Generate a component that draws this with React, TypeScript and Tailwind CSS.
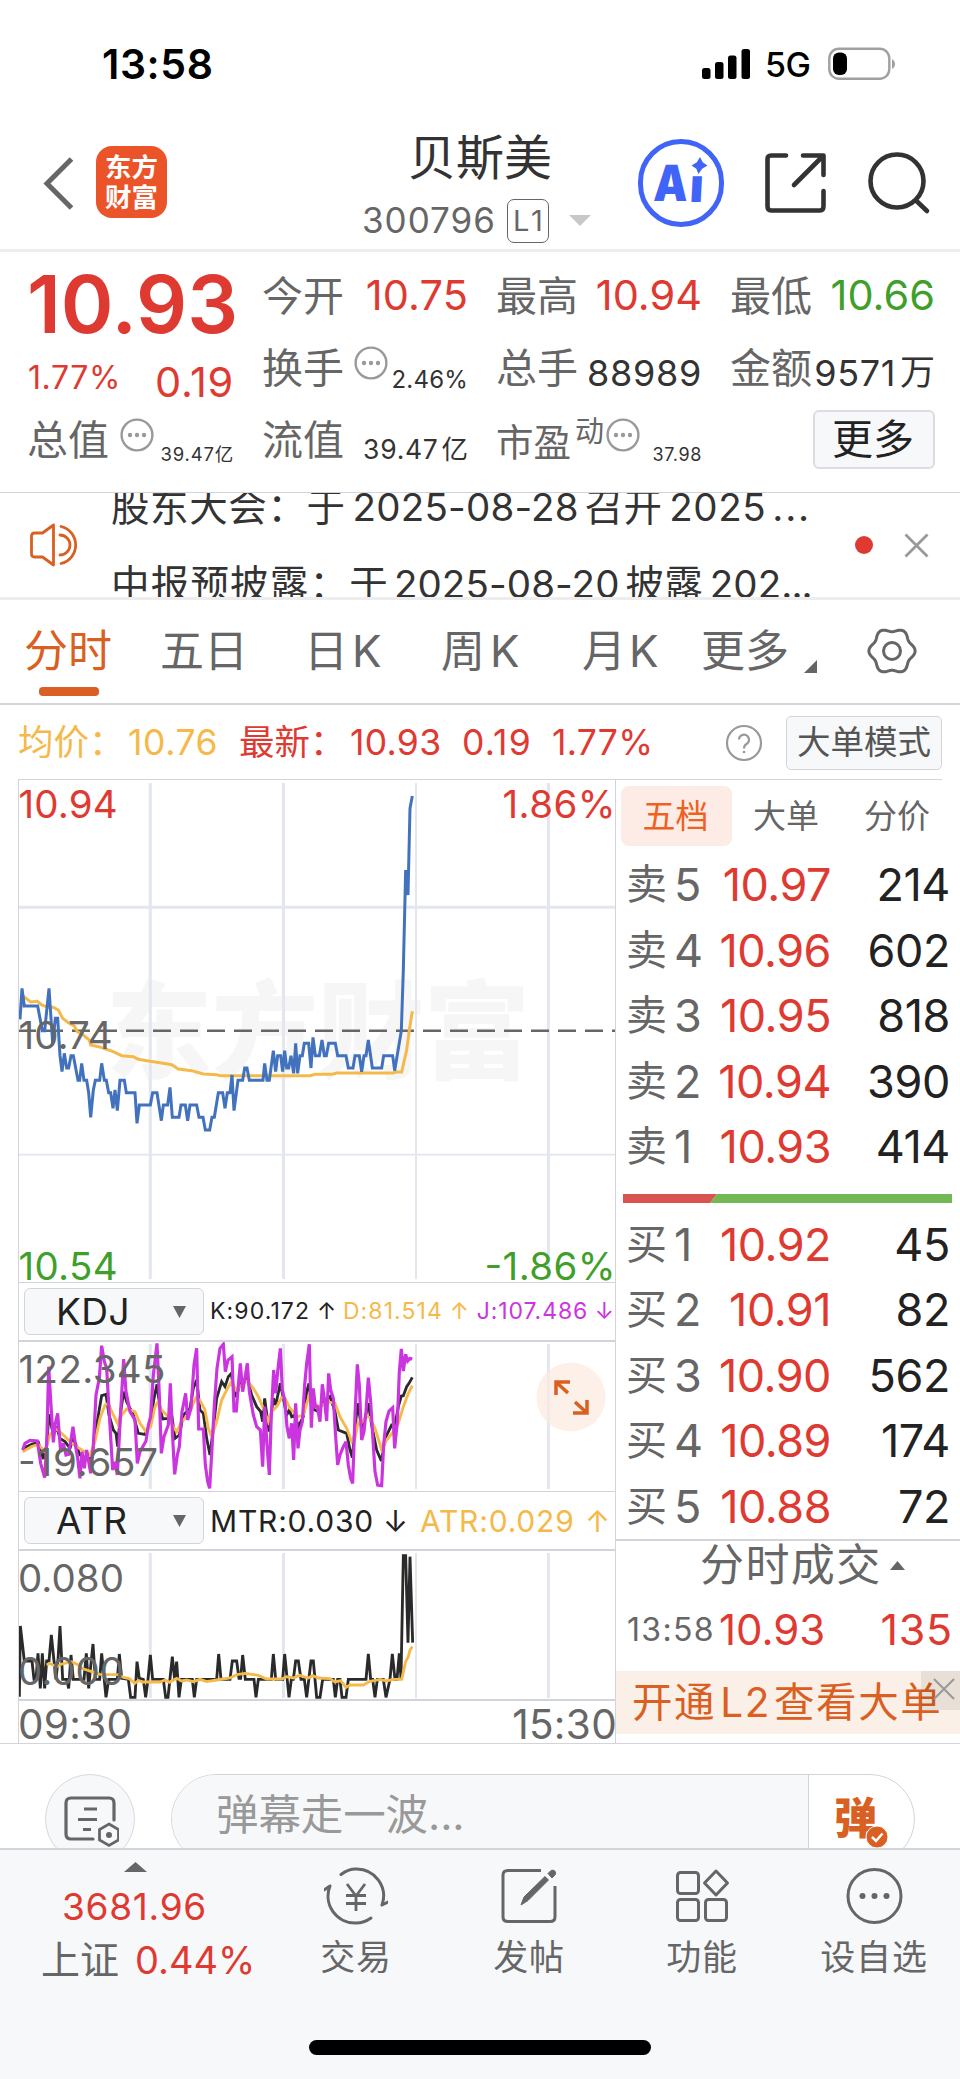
import React from "react";

const PRICE =
  "30,118 36,25 43,78 83,78 97,152 104,152 117,25 128,190 136,115 143,115 150,227 156,275 163,220 170,264 176,264 183,227 190,227 204,301 209,301 215,250 222,301 230,301 236,338 242,412 250,330 256,301 269,301 275,250 283,301 289,301 296,338 302,338 309,385 315,330 322,392 330,301 343,301 349,338 375,338 381,430 388,375 421,375 428,338 441,338 454,422 460,375 473,375 480,322 487,412 507,412 513,375 526,375 533,422 540,375 560,375 567,412 579,412 586,450 599,450 606,412 613,412 625,338 638,338 645,385 652,338 660,338 666,285 672,392 684,301 698,301 704,264 711,264 718,301 759,301 764,250 771,301 778,301 790,212 797,275 803,227 812,227 818,275 824,212 830,264 836,264 843,227 851,280 857,190 863,280 870,227 877,227 883,190 896,190 903,264 909,172 916,227 928,227 936,180 943,227 949,227 956,190 976,190 983,227 1008,227 1015,264 1029,264 1035,227 1048,227 1055,275 1062,227 1068,227 1075,180 1087,264 1115,264 1121,227 1148,227 1154,272 1174,152 1180,-30 1187,-330 1194,-255 1200,-515 1207,-552";
const AVERAGE =
  "33,85 36,56 42,50 62,66 82,64 95,75 115,82 130,82 145,90 158,115 175,128 193,138 202,155 220,165 238,180 242,195 265,200 290,208 310,215 335,227 370,230 385,238 420,244 450,248 485,254 505,267 545,272 580,282 620,284 630,287 900,287 915,283 965,283 980,279 1150,279 1157,276 1175,276 1190,210 1198,150 1207,94";
const KDJ_J =
  "38,345 45,325 60,316 82,318 92,385 104,428 110,330 116,95 123,210 130,322 136,265 143,235 152,350 160,325 168,360 176,358 189,275 197,335 203,370 210,430 216,350 223,400 230,345 242,415 250,330 258,180 268,130 275,32 283,80 290,100 298,240 308,405 315,380 322,420 332,230 341,72 348,170 360,230 375,255 382,385 390,350 408,318 415,270 422,245 430,120 441,25 448,180 454,355 462,305 475,270 481,145 487,290 494,418 502,360 508,335 516,230 527,175 533,255 543,220 552,90 560,40 566,282 580,282 586,390 593,440 599,460 606,340 613,210 621,100 630,40 640,28 646,110 654,75 666,65 672,228 679,228 685,150 691,85 698,170 704,135 712,85 718,170 730,240 740,275 751,285 758,395 764,215 771,330 778,420 784,240 791,105 797,175 803,110 811,40 817,165 824,195 831,275 838,310 845,265 851,375 857,205 864,340 870,285 877,260 884,150 890,85 898,28 904,278 910,160 916,215 922,215 930,260 937,148 943,190 950,258 956,115 962,165 970,190 976,290 983,390 990,360 1000,335 1008,320 1015,390 1022,430 1028,445 1035,240 1042,88 1048,150 1055,315 1062,290 1068,230 1075,128 1082,200 1088,300 1095,410 1103,450 1115,452 1121,330 1128,260 1137,228 1148,218 1154,340 1162,260 1168,110 1174,42 1180,108 1187,58 1193,78 1200,70 1207,72";
const KDJ_K =
  "38,345 50,335 65,328 85,322 100,372 110,330 117,238 130,300 140,275 150,310 165,320 180,340 190,310 210,360 230,370 245,370 255,300 265,240 275,182 288,178 297,240 310,285 318,295 323,335 332,230 341,170 350,200 370,240 385,295 405,298 420,270 432,190 441,148 450,220 458,252 475,250 483,225 495,310 508,300 520,240 530,230 540,220 550,160 560,135 570,225 580,235 590,310 600,360 610,280 620,190 635,140 645,155 655,125 664,115 672,170 680,185 690,140 712,130 725,180 740,215 752,230 758,260 764,190 777,290 790,190 797,210 811,145 820,190 830,240 838,225 845,245 855,240 865,275 880,245 890,170 897,145 905,220 925,230 940,200 960,185 975,230 985,285 1010,295 1020,345 1027,368 1035,280 1043,205 1055,280 1065,250 1075,205 1085,270 1100,345 1114,378 1125,310 1145,270 1155,270 1165,215 1174,183 1180,182 1190,155 1197,145 1207,127";
const KDJ_D =
  "38,350 65,335 85,328 105,350 120,300 135,280 155,295 180,320 200,335 240,360 255,320 270,250 285,210 295,205 310,240 325,270 335,240 350,222 375,230 390,265 408,290 422,275 435,215 444,200 455,225 475,245 490,275 500,290 515,260 535,240 550,205 560,185 572,200 585,225 595,280 605,305 620,260 635,195 650,165 664,140 680,165 695,150 712,137 730,160 745,185 760,220 775,260 785,230 800,215 815,188 825,190 840,220 865,245 880,240 898,180 910,205 930,215 950,200 975,205 990,245 1010,280 1025,320 1035,310 1045,260 1055,262 1070,245 1080,248 1095,280 1115,345 1130,315 1150,290 1165,265 1180,215 1195,175 1207,152";
const MTR =
  "28,440 31,228 43,333 66,333 72,388 78,388 84,310 91,415 97,310 104,415 110,333 117,333 124,255 132,333 138,388 144,330 150,228 158,388 170,388 176,415 183,315 190,388 222,388 229,310 236,415 242,350 249,282 256,388 269,388 275,310 288,442 296,388 322,388 328,312 335,385 355,388 362,442 375,442 381,335 388,385 400,388 407,442 414,388 421,315 428,388 460,388 467,442 474,442 487,320 494,388 500,335 507,442 514,388 547,388 553,442 560,388 620,388 626,312 633,388 660,388 667,333 680,333 687,385 692,385 698,315 706,388 732,388 738,442 745,388 784,388 790,312 797,388 818,388 824,312 837,442 844,388 850,388 857,333 865,333 873,388 883,388 890,442 903,333 910,333 920,442 930,442 938,388 970,388 976,442 983,388 990,388 996,442 1008,442 1015,388 1068,388 1075,312 1082,388 1088,388 1095,442 1102,388 1120,388 1128,442 1140,388 1147,312 1155,388 1161,388 1168,310 1173,385 1180,17 1187,17 1194,278 1200,20 1208,278";
const ATR =
  "110,345 118,340 140,350 155,342 185,335 205,345 215,355 245,365 270,373 325,374 340,382 358,386 374,400 385,392 400,396 450,396 465,390 478,397 500,385 515,393 530,390 550,395 570,388 590,395 620,390 660,384 680,374 705,370 745,376 770,387 815,387 830,380 850,384 868,376 895,384 908,377 925,384 960,386 975,396 992,392 1008,412 1020,405 1060,405 1080,394 1110,388 1130,393 1150,388 1175,388 1187,335 1195,320 1200,300 1207,290";

const ASKS = [["卖", "5", "10.97", "214"], ["卖", "4", "10.96", "602"], ["卖", "3", "10.95", "818"], ["卖", "2", "10.94", "390"], ["卖", "1", "10.93", "414"]];
const BIDS = [["买", "1", "10.92", "45"], ["买", "2", "10.91", "82"], ["买", "3", "10.90", "562"], ["买", "4", "10.89", "174"], ["买", "5", "10.88", "72"]];
const GRID_X = [150.3, 283.5, 416, 548.4];

// Six-lobed outline of the settings gear
const GEAR = Array.from({ length: 120 }, (_, i) => {
  const a = (i / 120) * Math.PI * 2;
  const r = 21.2 + 1.9 * Math.cos(6 * a);
  return `${(26 + r * Math.cos(a)).toFixed(2)},${(26 + r * Math.sin(a)).toFixed(2)}`;
}).join(" ");

function Series({ points, color, width = 8.5 }: { points: string; color: string; width?: number }) {
  return <polyline points={points} fill="none" stroke={color} strokeWidth={width} strokeLinejoin="miter" strokeMiterlimit={3} />;
}

function VGrid({ y1, y2 }: { y1: number; y2: number }) {
  return (
    <g stroke="#e3e6ef">
      {GRID_X.map((x, i) => (
        <line key={x} x1={x} x2={x} y1={y1} y2={y2} strokeWidth={i === 2 ? 2 : 3} />
      ))}
    </g>
  );
}

function Dots({ className }: { className?: string }) {
  return (
    <svg width="34" height="34" viewBox="0 0 34 34" className={className}>
      <circle cx="17" cy="17" r="15.4" fill="none" stroke="#999" strokeWidth="2.4" />
      <g fill="#999"><circle cx="10" cy="17" r="2.2" /><circle cx="17" cy="17" r="2.2" /><circle cx="24" cy="17" r="2.2" /></g>
    </svg>
  );
}

function BookRow({ row }: { row: string[] }) {
  return (
    <div className="flex h-[65.5px] items-center pl-[10px] pr-[10px] text-[45px]">
      <span className="w-[48px] text-[41px] text-[#666]">{row[0]}</span>
      <span className="w-[30px] text-[#666]">{row[1]}</span>
      <span className="w-[127px] text-right tracking-[-0.5px] text-[#df3a32]">{row[2]}</span>
      <span className="flex-1 text-right tracking-[-0.4px] text-[#222]">{row[3]}</span>
    </div>
  );
}

function IndicatorButton({ name }: { name: string }) {
  return (
    <div className="ml-[5px] flex h-[47px] w-[180px] shrink-0 items-center rounded-[6px] border-[1.5px] border-[#d3d4db] bg-[#f7f8fa] pl-[31px]">
      <span className="w-[117px] text-[37px] tracking-[0.5px] text-[#222]">{name}</span>
      <svg width="13" height="12" viewBox="0 0 13 12"><path d="M0 0H13L6.5 12Z" fill="#666" /></svg>
    </div>
  );
}

function NavItem({ label, children, className }: { label: string; children: React.ReactNode; className: string }) {
  return (
    <div className={"flex flex-col items-center " + className}>
      <svg width="64" height="64" viewBox="0 0 64 64" fill="none" stroke="#666" strokeWidth="3">{children}</svg>
      <span className="mt-[12px] text-[35px] tracking-[0.8px] text-[#666]">{label}</span>
    </div>
  );
}

export default function App() {
  return (
    <div className="flex h-[2079px] w-[960px] flex-col overflow-hidden whitespace-nowrap bg-white font-['Inter','Noto_Sans_CJK_SC',sans-serif] leading-none text-[#333]">
      {/* status bar */}
      <div className="flex h-[128px] shrink-0 items-center pl-[102px] pr-[64px]">
        <span className="text-[41px] font-semibold tracking-[0.6px] text-black">13:58</span>
        <svg className="ml-auto" width="48" height="32" viewBox="0 0 48 32">
          <rect x="0" y="20" width="8.5" height="11" rx="2.5" />
          <rect x="13" y="14" width="8.5" height="17" rx="2.5" />
          <rect x="26" y="7.5" width="8.5" height="23.5" rx="2.5" />
          <rect x="39.5" y="1" width="8.5" height="30" rx="2.5" />
        </svg>
        <span className="ml-[15px] w-[63px] pt-[2px] text-[34px] font-medium tracking-[-0.4px] text-black">5G</span>
        <svg width="68" height="34" viewBox="0 0 68 34">
          <rect x="1.3" y="1.8" width="60" height="30" rx="9.5" fill="none" stroke="#a0a0a0" strokeWidth="2.4" />
          <rect x="5" y="5.5" width="14" height="22.5" rx="6" fill="#000" />
          <path d="M64 12c4 2 4 8 0 10Z" fill="#a0a0a0" />
        </svg>
      </div>

      {/* header */}
      <div className="flex h-[124px] shrink-0 border-b-[3px] border-[#ededed] pl-[43px]">
        <svg className="mt-[29px]" width="32" height="54" viewBox="0 0 32 54" fill="none" stroke="#666" strokeWidth="5"><path d="M28.5 2L4 26.5L28.5 51" /></svg>
        <div className="ml-[21px] mt-[18px] flex h-[72px] w-[71px] flex-col items-center justify-center gap-[3px] rounded-[16px] bg-[#ea5428] text-[26.5px] font-bold text-white">
          <span>东方</span>
          <span>财富</span>
        </div>
        <div className="ml-[193px] flex w-[240px] flex-col">
          <div className="ml-[48px] mt-[6px] text-[48px]">贝斯美</div>
          <div className="ml-[2px] mt-[16px] flex h-[45px] items-center">
            <span className="text-[35px] tracking-[1px] text-[#666]">300796</span>
            <span className="ml-[11px] flex h-[44px] w-[42px] items-center justify-center rounded-[7px] border-[1.5px] border-[#666] pl-[3px] text-[29px] tracking-[3px] text-[#666]">L1</span>
            <svg className="ml-[20px]" width="22" height="11" viewBox="0 0 22 11"><path d="M0 0H22L11 11Z" fill="#c8c8c8" /></svg>
          </div>
        </div>
        <div className="relative ml-[38px] mt-[11px] flex h-[88px] w-[86px] items-center rounded-full border-[5px] border-[#4164f8] pl-[8px] text-[50px] font-black text-[#4164f8]">
          <span className="origin-center -skew-x-3 scale-x-[.86]">A</span>
          <span className="-ml-[1px] -skew-x-3 pt-[3px] text-[47px]">ı</span>
          <svg className="absolute left-[48px] top-[13px]" width="17" height="17" viewBox="0 0 16 16"><path d="M8.500 0L11 5L15.500 8L10.500 11L7 16L5 11L.5 8L5.500 5Z" fill="#4164f8" /></svg>
        </div>
        <svg className="ml-[40px] mt-[22px]" width="64" height="66" viewBox="1 0 64 66" fill="none" stroke="#333" strokeWidth="4.6" strokeLinecap="round" strokeLinejoin="round">
          <path d="M23 5.5H8Q4.500 5.500 4.500 9V56Q4.500 60.500 8 60.500H57Q60.500 60.500 60.500 56V41" />
          <path d="M40 5.500H60.500V25M60 6L31 35" />
        </svg>
        <svg className="ml-[37px] mt-[22px]" width="68" height="68" viewBox="0 0 68 68" fill="none" stroke="#333" strokeWidth="4.600" strokeLinecap="round">
          <circle cx="32" cy="31" r="26.500" /><path d="M51 50.500L62 61" />
        </svg>
      </div>

      {/* quote summary */}
      <div className="flex h-[240px] shrink-0 pt-[8px] text-[41px] text-[#666]">
        <div className="ml-[28px] flex w-[206px] flex-col">
          <div className="-ml-[1px] flex h-[88px] items-center text-[80px] font-semibold text-[#df3a32]">10.93</div>
          <div className="flex h-[56px] items-center justify-between text-[#df3a32]">
            <span className="pt-[3px] text-[32px] tracking-[0.6px]">1.77%</span>
            <span className="pt-[13px] text-[41.5px] tracking-[0.7px]">0.19</span>
          </div>
          <div className="-ml-[1px] flex h-[72px] items-center">
            <span>总值</span>
            <Dots className="-mt-[11px] ml-[11px]" />
            <span className="ml-auto pt-[29px] text-[18.5px] tracking-[0.8px] text-[#333]">39.47亿</span>
          </div>
        </div>
        <div className="ml-[28px] flex w-[206px] flex-col">
          <div className="flex h-[72px] items-center justify-between"><span>今开</span><span className="text-[41.5px] tracking-[0.1px] text-[#df3a32]">10.75</span></div>
          <div className="flex h-[72px] items-center"><span>换手</span><Dots className="-mt-[11px] ml-[10px]" /><span className="ml-auto pt-[23px] text-[24px] tracking-[0.2px] text-[#333]">2.46%</span></div>
          <div className="flex h-[72px] items-center justify-between"><span>流值</span><span className="flex pt-[19px] text-[26.5px] tracking-[0.7px] text-[#333]">39.47<span className="ml-[3px] tracking-[0]">亿</span></span></div>
        </div>
        <div className="ml-[28px] flex w-[206px] flex-col">
          <div className="flex h-[72px] items-center justify-between"><span>最高</span><span className="text-[41.5px] text-[#df3a32]">10.94</span></div>
          <div className="flex h-[72px] items-center justify-between"><span>总手</span><span className="pt-[10px] text-[36px] tracking-[0.7px] text-[#333]">88989</span></div>
          <div className="flex h-[72px] items-center">
            <span className="pt-[5px] text-[37.500px]">市盈</span>
            <span className="-mt-[18px] ml-[4px] text-[29px]">动</span>
            <Dots className="-mt-[11px] ml-[2px]" />
            <span className="ml-auto pt-[29px] text-[18px] tracking-[0.6px] text-[#333]">37.98</span>
          </div>
        </div>
        <div className="ml-[28px] flex w-[205px] flex-col">
          <div className="flex h-[72px] items-center justify-between"><span>最低</span><span className="text-[41.5px] text-[#3f9f2a]">10.66</span></div>
          <div className="flex h-[72px] items-center justify-between"><span>金额</span><span className="flex items-center pt-[9px] text-[36px] tracking-[0.6px] text-[#333]">9571<span className="ml-[4px] text-[35px] tracking-[0]">万</span></span></div>
          <div className="ml-auto mt-[6px] flex h-[59px] w-[122px] items-center justify-center rounded-[6px] border-[2px] border-[#dcdde2] bg-[#f7f8fa] pr-[2px] text-[41px] text-[#222]">更多</div>
        </div>
      </div>

      {/* announcements */}
      <div className="flex h-[108px] shrink-0 items-center border-b-[3px] border-t border-b-[#ededed] border-t-[#d3d4db]">
        <svg className="ml-[29px] shrink-0" width="53" height="44" viewBox="0 0 52 44" fill="none" stroke="#d95f22" strokeWidth="2.8" strokeLinejoin="round">
          <path d="M24 2L13 10H5Q2 10 2 13V31Q2 34 5 34H13L24 42Z" />
          <path d="M30.500 12a10 10 0 0 1 0 20M31.500 3.500a19 19 0 0 1 0 37" strokeLinecap="round" />
        </svg>
        <div className="ml-[29px] flex h-[104px] w-[720px] flex-col justify-center overflow-hidden pt-[2px] text-[38.5px]">
          <div className="flex h-[77px] shrink-0 items-center tracking-[0.2px]">
            <span className="tracking-[0.6px]">股东大会：于</span><span className="ml-[7px]">2025-08-28</span><span className="ml-[6px]">召开</span><span className="ml-[7px] tracking-[0.6px]">2025</span><span className="ml-[6px] tracking-[1.8px]">...</span>
          </div>
          <div className="flex h-[77px] shrink-0 items-center tracking-[0.1px]">
            <span className="tracking-[1.2px]">中报预披露：于</span><span className="ml-[5px]">2025-08-20</span><span className="ml-[6px]">披露</span><span className="ml-[7px]">202</span><span className="tracking-[-1px]">...</span>
          </div>
        </div>
        <span className="ml-[24px] h-[18px] w-[18px] rounded-full bg-[#df3a32]" />
        <svg className="ml-[31px]" width="25" height="25" viewBox="0 0 25 25" stroke="#999" strokeWidth="2.8"><path d="M1.500 1.500L23.500 23.500M23.500 1.500L1.500 23.500" /></svg>
      </div>

      {/* period tabs */}
      <div className="flex h-[105px] shrink-0 border-b-2 border-[#d3d4db] pl-[24px] text-[44px] text-[#666]">
        <div className="flex w-[136px] flex-col text-[#d95f22]">
          <span className="mt-[29px]">分时</span>
          <span className="ml-[15px] mt-[14px] h-[9px] w-[60px] rounded-[4px] bg-[#d95f22]" />
        </div>
        <span className="mt-[29px] w-[144px]">五日</span>
        <span className="mt-[29px] w-[137px] tracking-[4px]">日K</span>
        <span className="mt-[29px] w-[141px] tracking-[5px]">周K</span>
        <span className="mt-[29px] w-[119px] tracking-[3px]">月K</span>
        <span className="mt-[29px] w-[103px]">更多</span>
        <svg className="mt-[60px]" width="13" height="13" viewBox="0 0 13 13"><path d="M13 0V13H0Z" fill="#666" /></svg>
        <svg className="ml-[49px] mt-[25px]" width="52" height="52" viewBox="0 0 52 52" fill="none" stroke="#666" strokeWidth="3" strokeLinejoin="round">
          <polygon points={GEAR} />
          <circle cx="26" cy="26" r="8.500" />
        </svg>
      </div>

      {/* latest price line */}
      <div className="flex h-[74px] shrink-0 items-center pl-[18px] pr-[18px] pt-[1px] text-[35.500px] text-[#df3a32]">
        <span className="w-[110px] text-[#f5b94a]">均价：</span>
        <span className="w-[111px] tracking-[0.6px] text-[#f5b94a]">10.76</span>
        <span className="w-[111px]">最新：</span>
        <span className="w-[112px] tracking-[0.3px]">10.93</span>
        <span className="w-[90px] tracking-[1.2px]">0.19</span>
        <span className="tracking-[0.3px]">1.77%</span>
        <svg className="ml-auto" width="38" height="38" viewBox="0 0 38 38" fill="none" stroke="#999" strokeWidth="2.200"><circle cx="19" cy="19" r="17" /><path d="M14 15.500a5 5 0 1 1 7.500 4.500q-2.500 1.500-2.500 4.500" /><circle cx="19" cy="28" r="1.300" fill="#999" stroke="none" /></svg>
        <div className="ml-[23px] flex h-[54px] w-[156px] items-center justify-center rounded-[5px] border-[1.5px] border-[#d3d4db] bg-[#f7f8fa] text-[33.500px] text-[#555]">大单模式</div>
      </div>

      {/* charts and order book */}
      <div className="flex h-[965px] shrink-0 border-b border-[#d3d4db]">
        <div className="ml-[18px] flex w-[598px] shrink-0 flex-col border-x border-t border-[#d3d4db]">
          <svg className="h-[502px] w-[596px] shrink-0" viewBox="19 780 596 502" fontFamily="Inter, 'Noto Sans CJK SC', sans-serif">
            <text x="106" y="1070" fontSize="106" fontWeight="800" fill="#f6f6f7" textLength="424" lengthAdjust="spacingAndGlyphs">东方财富</text>
            <VGrid y1={783} y2={1279} />
            <line x1="18" x2="616" y1="907.3" y2="907.3" stroke="#e3e6ef" strokeWidth="3" />
            <line x1="18" x2="616" y1="1154.600" y2="1154.600" stroke="#e3e6ef" strokeWidth="1.600" />
            <line x1="18" x2="616" y1="1030.800" y2="1030.800" stroke="#666" strokeWidth="2.400" strokeDasharray="18 9" />
            <g transform="translate(10 980) scale(.33333)">
              <Series points={AVERAGE} color="#f5b94a" width={9} />
              <Series points={PRICE} color="#4272bd" width={9} />
            </g>
            <g fontSize="38.500">
              <text x="18.500" y="818" fill="#df3a32" textLength="99">10.94</text>
              <text x="615.500" y="818" fill="#df3a32" textAnchor="end" textLength="113">1.86%</text>
              <text x="18.500" y="1049" fill="#666" textLength="94">10.74</text>
              <text x="18.500" y="1280" fill="#3f9f2a" textLength="99">10.54</text>
              <text x="615.500" y="1280" fill="#3f9f2a" textAnchor="end" textLength="131">-1.86%</text>
            </g>
          </svg>
          <div className="flex h-[58px] shrink-0 items-center border-t border-[#d3d4db] text-[23px] tracking-[1.1px]">
            <IndicatorButton name="KDJ" />
            <span className="ml-[6px] w-[107px] text-[#222]">K:90.172</span><span className="w-[26px] text-[#222]">↑</span>
            <span className="w-[107px] text-[#f5b94a]">D:81.514</span><span className="w-[27px] text-[#f5b94a]">↑</span>
            <span className="w-[118px] tracking-[0.9px] text-[#cb35e0]">J:107.486</span><span className="text-[#cb35e0]">↓</span>
          </div>
          <div className="relative h-[151px] shrink-0 border-t-2 border-[#d3d4db]">
            <svg className="h-[149px] w-[596px]" viewBox="19 1342 596 149" fontFamily="Inter, sans-serif">
              <VGrid y1={1344} y2={1489} />
              <g transform="translate(10 1335) scale(.33333)">
                <Series points={KDJ_K} color="#2a2a2a" />
                <Series points={KDJ_D} color="#f5b94a" />
                <Series points={KDJ_J} color="#cb35e0" width={9.5} />
              </g>
              <g fontSize="38.500" fill="#666"><text x="18.500" y="1383" textLength="147">122.345</text><text x="18" y="1476" textLength="140">-19.657</text></g>
            </svg>
            <svg className="absolute left-[517px] top-[20px]" width="70" height="70" viewBox="0 0 70 70" fill="none" stroke="#d95f22" strokeWidth="3.500">
              <circle cx="35" cy="35" r="34.500" fill="#fbe9df" fillOpacity=".7" stroke="none" />
              <path d="M20 33V20H34M20.500 20.500L32 31M51 38V51H37M50.500 50.500L39 40" />
            </svg>
          </div>
          <div className="flex h-[58px] shrink-0 items-center border-t border-[#d3d4db] text-[30px] tracking-[0.8px]">
            <IndicatorButton name="ATR" />
            <span className="ml-[6px] w-[173px] text-[#222]">MTR:0.030</span><span className="w-[37px] text-[#222]">↓</span>
            <span className="w-[165px] text-[#f5b94a]">ATR:0.029</span><span className="text-[#f5b94a]">↑</span>
          </div>
          <svg className="box-content h-[148px] w-[596px] shrink-0 border-y-2 border-[#d3d4db]" viewBox="19 1551 596 148" fontFamily="Inter, sans-serif">
            <VGrid y1={1553} y2={1698} />
            <g transform="translate(10 1550) scale(.33333)">
              <Series points={MTR} color="#2a2a2a" />
              <Series points={ATR} color="#f5b94a" />
            </g>
            <g fontSize="38.500" fill="#666"><text x="18" y="1592" textLength="106">0.080</text><text x="18" y="1684.500" textLength="106">0.000</text></g>
          </svg>
          <div className="-mr-[2px] flex flex-1 items-center justify-between pt-[4px] text-[40.500px] tracking-[0.3px] text-[#666]"><span className="-ml-[1px]">09:30</span><span>15:30</span></div>
        </div>

        <div className="flex flex-1 flex-col">
          <div className="mr-[18px] border-t border-[#d3d4db]" />
          <div className="mb-[6px] mt-[6px] flex h-[60px] shrink-0 items-center text-[33px] text-[#666]">
            <span className="ml-[5px] flex h-[60px] w-[111px] items-center justify-center rounded-[8px] bg-[#fcece5] pr-[2px] text-[#f0601e]">五档</span>
            <span className="ml-[21px]">大单</span>
            <span className="ml-[45px]">分价</span>
          </div>
          {ASKS.map((r) => <BookRow key={r[1]} row={r} />)}
          <svg className="ml-[7px] mt-[14px] shrink-0" width="329" height="9" viewBox="0 0 329 9"><path d="M0 0H94L87 9H0Z" fill="#d9534f" /><path d="M94 0H329V9H87Z" fill="#72b854" /></svg>
          <div className="h-[9px] shrink-0" />
          {BIDS.map((r) => <BookRow key={r[1]} row={r} />)}
          <div className="flex h-[50px] shrink-0 items-center border-t-2 border-[#d3d4db] pl-[84px] text-[44px] tracking-[1.4px] text-[#666]">
            分时成交
            <svg className="ml-[8px]" width="15" height="9" viewBox="0 0 15 9"><path d="M0 9L7.500 0L15 9Z" fill="#666" /></svg>
          </div>
          <div className="flex h-[81px] shrink-0 items-center pl-[11px] pr-[7px] text-[42px] text-[#df3a32]">
            <span className="w-[92px] text-[32px] tracking-[1.3px] text-[#666]">13:58</span><span>10.93</span><span className="ml-auto text-[43px] tracking-[0.8px]">135</span>
          </div>
          <div className="relative mt-[1px] flex h-[63px] shrink-0 items-center bg-[#faf0e8] pl-[16px] pt-[2px] text-[40.500px] tracking-[1.6px] text-[#d95f22]">
            <span>开通</span><span className="ml-[4px]">L2</span><span className="ml-[3px]">查看大单</span>
            <span className="absolute right-0 top-0 flex h-[39px] w-[39px] items-center justify-center bg-black/[.07] pl-[6px]">
              <svg className="-mt-[4px]" width="22" height="22" viewBox="0 0 22 22" stroke="#999" strokeWidth="2"><path d="M1 1L21 21M21 1L1 21" /></svg>
            </span>
          </div>
        </div>
      </div>

      {/* comment bar */}
      <div className="flex h-[104px] shrink-0 overflow-hidden pt-[30px]">
        <div className="ml-[45px] flex h-[90px] w-[90px] shrink-0 justify-center rounded-full border-[1.5px] border-[#d8d9e0] bg-[#f7f8fa] pl-[2px] pt-[20px]">
          <svg width="56" height="54" viewBox="0 0 56 54" fill="none" stroke="#666" strokeWidth="3.200">
            <path d="M30 44H8Q3 44 3 39V8Q3 3 8 3H46Q51 3 51 8V25" strokeLinecap="round" />
            <path d="M21 14H34M15 24.500H34M20 34.500H28" />
            <path d="M46 29L55.500 34.500V45L46 50.500L36.500 45V34.500Z" strokeWidth="2.800" /><circle cx="46" cy="40" r="3" fill="#666" stroke="none" />
          </svg>
        </div>
        <div className="ml-[36px] flex h-[90px] w-[744px] shrink-0 overflow-hidden rounded-full border-[1.5px] border-[#d3d4db] bg-white">
          <div className="w-[637px] border-r-[1.5px] border-[#d3d4db] bg-[#f7f8fa] pl-[44px] pt-[19px] text-[42.500px] tracking-[-0.1px] text-[#999]">弹幕走一波...</div>
          <div className="relative pl-[25px] pt-[22px] text-[43px] font-black text-[#d95f22]">
            弹
            <svg className="absolute left-[56px] top-[50px]" width="24" height="24" viewBox="0 0 24 24"><circle cx="12" cy="12" r="11" fill="#d95f22" stroke="#fff" strokeWidth="1" /><path d="M7 12L11 16L17.500 8.500" fill="none" stroke="#fff" strokeWidth="2.500" /></svg>
          </div>
        </div>
      </div>

      {/* bottom navigation */}
      <div className="flex flex-1 flex-col items-center border-t-2 border-[#d3d4db] bg-[#f7f8fa]">
        <div className="flex h-[190px] w-full">
          <div className="ml-[41px] flex w-[215px] flex-col">
            <svg className="ml-[83px] mt-[12px]" width="23" height="10" viewBox="0 0 23 10"><path d="M0 10L11.500 0L23 10Z" fill="#666" /></svg>
            <span className="ml-[21px] mt-[16px] text-[37px] tracking-[0.7px] text-[#df3a32]">3681.96</span>
            <div className="mt-[15px] flex items-center"><span className="text-[39px] text-[#666]">上证</span><span className="ml-[16px] text-[38px] text-[#df3a32]">0.44%</span></div>
          </div>
          <NavItem label="交易" className="ml-[35px] w-[130px] pt-[14px]">
            <path d="M17 10.500Q24 5 32 5A27 27 0 0 1 58 41M58 41L64 38M47 54Q40 59 32 59A27 27 0 0 1 6 22M6 22L0 26" strokeLinecap="round" />
            <path d="M23 20L32 32L41 20M32 32V47M22 31.500H42M22 39.500H42" strokeWidth="2.800" />
          </NavItem>
          <NavItem label="发帖" className="ml-[43px] w-[130px] pt-[14px]">
            <path d="M44 6.500H11Q6 6.500 6 11V53Q6 57.500 11 57.500H53Q58 57.500 58 53V22" />
            <path d="M24 41L27 33L48 12.500L51.500 16L31 36.500ZM51 9.500L54 6.500Q57 5 58.500 8Q59 10 57.500 11.500L55 14Z" fill="#666" strokeWidth="1" />
          </NavItem>
          <NavItem label="功能" className="ml-[43px] w-[130px] pt-[14px]">
            <rect x="7.500" y="8.500" width="21" height="21" rx="3" /><rect x="7.500" y="35.500" width="21" height="21" rx="3" /><rect x="35.500" y="35.500" width="21" height="21" rx="3" /><path d="M46 7L57.500 19L46 31L34.500 19Z" strokeLinejoin="round" />
          </NavItem>
          <NavItem label="设自选" className="ml-[42px] w-[130px] pt-[14px]">
            <circle cx="32.500" cy="32" r="26.500" /><g fill="#666" stroke="none"><circle cx="20.500" cy="32" r="3" /><circle cx="32.500" cy="32" r="3" /><circle cx="44.500" cy="32" r="3" /></g>
          </NavItem>
        </div>
        <div className="h-[15px] w-[342px] rounded-full bg-black" />
      </div>
    </div>
  );
}
